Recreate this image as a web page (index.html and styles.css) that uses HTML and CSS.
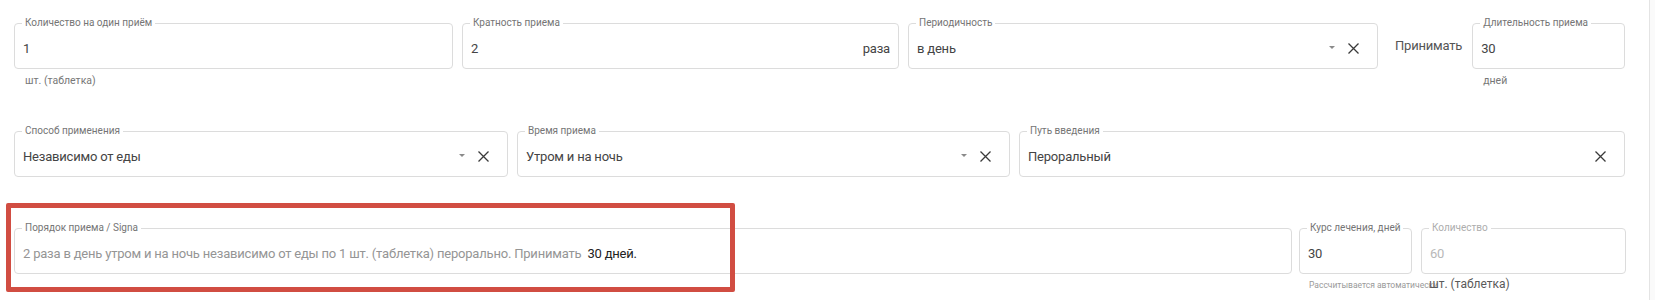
FILE: index.html
```html
<!DOCTYPE html>
<html lang="ru">
<head>
  <meta charset="UTF-8">
  <title>Назначение препарата</title>
  <link rel="stylesheet" href="styles.css">
</head>
<body>
  <div class="page">

    <div class="row row-dose">
      <div class="col col-qty">
        <fieldset class="field">
          <legend>Количество на один приём</legend>
          <div class="field-body"><span class="value">1</span></div>
        </fieldset>
        <div class="helper">шт. (таблетка)</div>
      </div>

      <div class="col col-times">
        <fieldset class="field">
          <legend>Кратность приема</legend>
          <div class="field-body">
            <span class="value">2</span>
            <span class="suffix">раза</span>
          </div>
        </fieldset>
      </div>

      <div class="col col-period">
        <fieldset class="field">
          <legend>Периодичность</legend>
          <div class="field-body">
            <span class="value">в день</span>
            <span class="arrow"></span>
            <svg class="clear" viewBox="0 0 11 11"><path d="M0.5 0.5L10.5 10.5M10.5 0.5L0.5 10.5"/></svg>
          </div>
        </fieldset>
      </div>

      <div class="inline-word">Принимать</div>

      <div class="col col-duration">
        <fieldset class="field">
          <legend>Длительность приема</legend>
          <div class="field-body"><span class="value">30</span></div>
        </fieldset>
        <div class="helper">дней</div>
      </div>
    </div>

    <div class="row row-method">
      <div class="col col-way">
        <fieldset class="field">
          <legend>Способ применения</legend>
          <div class="field-body">
            <span class="value">Независимо от еды</span>
            <span class="arrow"></span>
            <svg class="clear" viewBox="0 0 11 11"><path d="M0.5 0.5L10.5 10.5M10.5 0.5L0.5 10.5"/></svg>
          </div>
        </fieldset>
      </div>

      <div class="col col-time">
        <fieldset class="field">
          <legend>Время приема</legend>
          <div class="field-body">
            <span class="value">Утром и на ночь</span>
            <span class="arrow"></span>
            <svg class="clear" viewBox="0 0 11 11"><path d="M0.5 0.5L10.5 10.5M10.5 0.5L0.5 10.5"/></svg>
          </div>
        </fieldset>
      </div>

      <div class="col col-route">
        <fieldset class="field">
          <legend>Путь введения</legend>
          <div class="field-body">
            <span class="value">Пероральный</span>
            <svg class="clear" viewBox="0 0 11 11"><path d="M0.5 0.5L10.5 10.5M10.5 0.5L0.5 10.5"/></svg>
          </div>
        </fieldset>
      </div>
    </div>

    <div class="row row-signa">
      <div class="col col-signa">
        <fieldset class="field">
          <legend>Порядок приема / Signa</legend>
          <div class="field-body">
            <span class="value signa">2 раза в день утром и на ночь независимо от еды по 1 шт. (таблетка) перорально. Принимать&nbsp; <span class="signa-days">30 дней.</span></span>
          </div>
        </fieldset>
      </div>

      <div class="col col-course">
        <fieldset class="field">
          <legend>Курс лечения, дней</legend>
          <div class="field-body"><span class="value">30</span></div>
        </fieldset>
        <div class="helper helper-auto">Рассчитывается автоматически</div>
      </div>

      <div class="col col-total">
        <fieldset class="field disabled">
          <legend>Количество</legend>
          <div class="field-body"><span class="value">60</span></div>
        </fieldset>
        <div class="helper helper-unit">шт. (таблетка)</div>
      </div>
    </div>

    <!-- highlight frame drawn over the signa field -->
    <div class="highlight"></div>
  </div>
</body>
</html>
```

FILE: styles.css
```css
html {
  background: #fafafa;
}
body {
  margin: 0;
  font-family: Roboto, "Noto Sans", Arial, sans-serif;
  color: #333;
}
.page {
  position: relative;
  width: 1650px;
  height: 300px;
  box-sizing: border-box;
  padding: 17px 0 0 14px;
  background: #fff;
  border-right: 1px solid #e4e4e4;
}

.row {
  display: flex;
  align-items: flex-start;
  gap: 9px;
}
.row-dose {
  height: 108px;
}
.row-method {
  height: 97px;
}

.col-qty { width: 439px; }
.col-times { width: 437px; }
.col-period { width: 470px; }
.col-duration { width: 153px; }
.col-way { width: 494px; }
.col-time { width: 493px; }
.col-route { width: 606px; }
.col-signa { width: 1278px; }
.col-course { width: 113px; margin-left: -2px; }
.col-total { width: 205px; }

.field {
  margin: 0;
  padding: 0 8px;
  min-width: 0;
  border: 1px solid #dcdcdc;
  border-radius: 4px;
}
.field legend {
  margin-left: -1px;
  padding: 0 3px;
  font-size: 10px;
  line-height: 12px;
  color: #757575;
  white-space: nowrap;
}
.field-body {
  display: flex;
  align-items: center;
  height: 39px;
}
.value {
  flex: 1;
  font-size: 13px;
  letter-spacing: -0.2px;
  color: #444;
  white-space: nowrap;
}
.suffix {
  font-size: 13px;
  letter-spacing: -0.2px;
  color: #444;
}
.arrow {
  width: 0;
  height: 0;
  margin: 0 13px 3px 0;
  border-left: 3px solid transparent;
  border-right: 3px solid transparent;
  border-top: 3px solid #8a8a8a;
}
.clear {
  width: 11px;
  height: 11px;
  margin-right: 10px;
  fill: none;
  stroke: #3a3a3a;
  stroke-width: 1.3;
}

.helper {
  margin: 5px 0 0 11px;
  font-size: 10.5px;
  line-height: 13px;
  color: #777;
  white-space: nowrap;
}
.helper-auto {
  font-size: 8.5px;
  color: #9a9a9a;
  margin-left: 10px;
}
.helper-unit {
  margin-top: 4px;
  margin-left: 8px;
  font-size: 12px;
  color: #5a5a5a;
}

.inline-word {
  padding: 0 1px 0 8px;
  margin-top: 20px;
  font-size: 13px;
  letter-spacing: -0.2px;
  line-height: 18px;
  color: #555;
}

.signa {
  color: #959595;
}
.signa-days {
  color: #222;
}

.disabled legend {
  color: #adadad;
}
.disabled .value {
  color: #b8b8b8;
}

.highlight {
  position: absolute;
  left: 6px;
  top: 203px;
  width: 729px;
  height: 89px;
  box-sizing: border-box;
  border: 5px solid #d14d42;
  border-radius: 2px;
}
```
